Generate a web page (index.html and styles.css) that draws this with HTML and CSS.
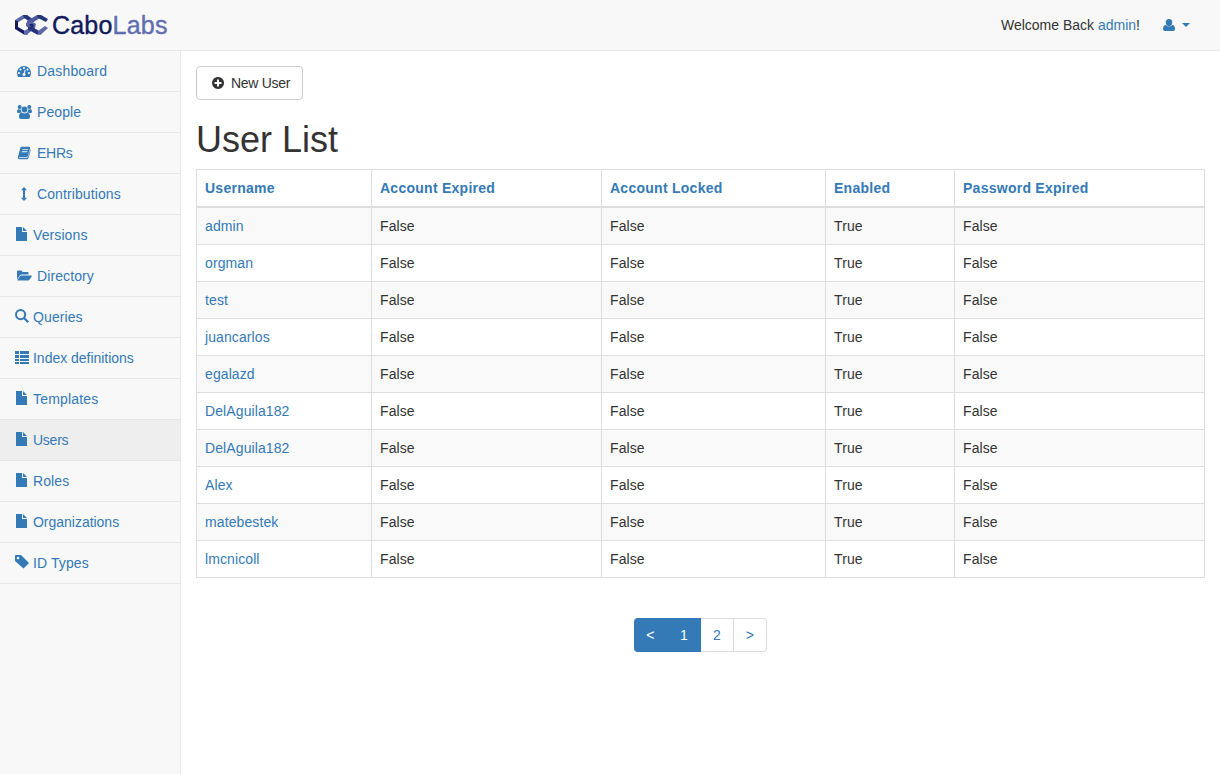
FILE: index.html
```
<!DOCTYPE html>
<html lang="en">
<head>
<meta charset="utf-8">
<title>User List</title>
<link rel="stylesheet" href="styles.css">
</head>
<body>
<svg width="0" height="0" class="defs">
  <symbol id="file" viewBox="0 0 14 14"><path d="M1 0h6v5h5v9H1zM8 0l4 4H8z"/></symbol>
</svg>
<header class="navbar">
  <a class="brand">
    <svg class="logo" width="33" height="20" viewBox="0 0 33 20">
      <path d="M0 5L8 0h5l-3 3-8 5z" fill="#5b68aa"/>
      <path d="M8 0h4l7 5-2 3-8-5z" fill="#26347b"/>
      <path d="M0 5l3 1.500V12l7 4 3 3.500H9L0 14z" fill="#151d60"/>
      <path d="M9 16l8-4.500V8h3v5l-8 6.500H9z" fill="#5b68aa"/>
      <path d="M12 6l10-6h3v3l-8 5-2 1v4l-3-1z" fill="#4c5a9f"/>
      <path d="M11 8l5-2 5 3-1 4-4 1-5-3z" fill="#5663a6"/>
      <path d="M14 9h4l1 2-2 1.500z" fill="#1b2568"/>
      <path d="M22 0h4l7 4-2 3-8-4z" fill="#26347b"/>
      <path d="M13 12l3-1 8 5 2 3.500h-4l-9-5z" fill="#26347b"/>
      <path d="M23 16l7-5 3 2-7 6.500h-3z" fill="#5b68aa"/>
    </svg>
    <span class="brand-name">Cabo<span class="brand-light">Labs</span></span>
  </a>
  <div class="top-right">
    <span class="welcome">Welcome Back <a>admin</a>!</span>
    <a class="user-menu">
      <svg width="12" height="14" viewBox="0 0 12 14"><path d="M6 1a3.200 3.200 0 0 1 3.100 4.300A3.300 3.300 0 0 1 6 8.200a3.300 3.300 0 0 1-3.100-2.900A3.200 3.200 0 0 1 6 1zM2.800 7q3.200 3 6.400 0Q12 7.300 12 11q0 2-2 2H2q-2 0-2-2 0-3.700 2.800-4z"/></svg>
      <svg width="8" height="4" viewBox="0 0 8 4"><path d="M0 0h8L4 4z"/></svg>
    </a>
  </div>
</header>
<div class="layout">
  <nav class="sidebar">
    <a class="item"><svg class="fw" width="18" height="14" viewBox="-256 0 2304 1792"><path fill-rule="evenodd" d="M384 1152q0-53-37.500-90.500t-90.500-37.500-90.500 37.500-37.500 90.500 37.500 90.500 90.500 37.500 90.500-37.500 37.500-90.500zm192-448q0-53-37.500-90.500t-90.500-37.500-90.500 37.500-37.500 90.500 37.500 90.500 90.500 37.500 90.500-37.500 37.500-90.500zm428 481l101-382q6-26-7.500-48.500t-38.500-29.500-48 6.500-30 39.500l-101 382q-60 5-107 43.500t-63 98.500q-20 77 20 146t117 89 146-20 89-117q16-60-6-117t-72-91zm660-33q0-53-37.500-90.500t-90.500-37.500-90.500 37.500-37.500 90.500 37.500 90.500 90.500 37.500 90.500-37.500 37.500-90.500zm-640-640q0-53-37.500-90.500t-90.500-37.500-90.500 37.500-37.500 90.500 37.500 90.500 90.500 37.500 90.500-37.500 37.500-90.500zm448 192q0-53-37.500-90.500t-90.500-37.500-90.500 37.500-37.500 90.500 37.500 90.500 90.500 37.500 90.500-37.500 37.500-90.500zm320 448q0 261-141 483-19 29-54 29h-1402q-35 0-54-29-141-221-141-483 0-182 71-348t191-286 286-191 348-71 348 71 286 191 191 286 71 348z"/></svg><span class="snug-wide">Dashboard</span></a>
    <a class="item"><svg class="fw" width="18" height="14" viewBox="0 0 18 14"><circle cx="4.700" cy="2" r="2"/><circle cx="14.300" cy="2" r="2"/><circle cx="9.500" cy="4.500" r="2.900"/><path d="M3.500 4q1.200.8 2.400.4-.2 1.800.8 2.900-1 0-1.800.8H3.500Q2 8 2 6.500 2 4 3.500 4zM15.500 4q-1.200.8-2.400.4.200 1.800-.8 2.900 1 0 1.800.8h1.400Q17 8 17 6.500 17 4 15.500 4zM6.800 7.400q2.700 2 5.400 0Q15 7.700 15 11.700q0 2.300-2 2.300H6q-2 0-2-2.300 0-4 2.800-4.300z"/></svg><span>People</span></a>
    <a class="item"><svg class="fw" width="18" height="14" viewBox="0 0 18 14"><path fill-rule="evenodd" d="M7 .7h7.200q1.200.2.900 1.300L12.900 10q-.3 1-1.300 1H4.800q-1 0-.9.800h8q.8 0 1.100-.8l2.300-7.800q.6.500.3 1.300L13.500 12q-.4 1.300-1.600 1.300H4.500Q2.800 13.300 2.800 11.500L5.200 2.300Q5.600.7 7 .7zM7.500 3.200l-.3.900h5.600l.3-.9zM6.900 5.300l-.3.900h5.600l.3-.9z"/></svg><span class="tight">EHRs</span></a>
    <a class="item"><svg class="fw" width="18" height="14" viewBox="0 0 18 14"><path d="M9 0l3 3.200h-2v7.600h2L9 14l-3-3.200h2V3.200H6z"/></svg><span>Contributions</span></a>
    <a class="item"><svg class="gl" width="14" height="14"><use href="#file"/></svg><span>Versions</span></a>
    <a class="item"><svg class="fw" width="18" height="14" viewBox="0 0 18 14"><path d="M2 10.500V2.500q0-1 1-1h3.300q1 0 1 1V3h5.200q1 0 1 1v1.600H6.800q-1.200 0-2 1zM6.500 6.500h9.800q.9.100.4 1l-2.500 3.400q-.6.700-1.600.7H3q-.9-.1-.4-.9L5 7.300q.6-.8 1.500-.8z"/></svg><span>Directory</span></a>
    <a class="item"><svg class="gl" width="14" height="14" viewBox="0 0 14 14"><circle cx="5.600" cy="5.600" r="4.600" fill="none" stroke="#337ab7" stroke-width="2"/><path d="M8.200 9.800l1.600-1.600 4.200 4.200-1.600 1.600z"/></svg><span>Queries</span></a>
    <a class="item"><svg class="gl" width="14" height="14" viewBox="0 0 14 14"><path d="M0 1h4v3H0zM5 1h9v3H5zM0 5h4v3H0zM5 5h9v3H5zM0 9h4v2H0zM5 9h9v2H5zM0 12h4v2H0zM5 12h9v2H5z"/></svg><span class="snug">Index definitions</span></a>
    <a class="item"><svg class="gl" width="14" height="14"><use href="#file"/></svg><span class="wide">Templates</span></a>
    <a class="item active"><svg class="gl" width="14" height="14"><use href="#file"/></svg><span class="tight">Users</span></a>
    <a class="item"><svg class="gl" width="14" height="14"><use href="#file"/></svg><span>Roles</span></a>
    <a class="item"><svg class="gl" width="14" height="14"><use href="#file"/></svg><span class="snug">Organizations</span></a>
    <a class="item"><svg class="gl" width="14" height="14" viewBox="0 0 14 14"><path fill-rule="evenodd" d="M0 1q0-1 1-1h5l8 8-5.500 5.500L0 6zM3 1.700a1.300 1.300 0 1 0 .01 0z"/></svg><span>ID Types</span></a>
  </nav>
  <main class="content">
    <button class="btn"><svg width="12" height="12" viewBox="0 0 12 12"><path fill-rule="evenodd" d="M6 0a6 6 0 1 0 .01 0zM5 2.500h2V5h2.500v2H7v2.500H5V7H2.500V5H5z"/></svg><span>New User</span></button>
    <h1>User List</h1>
    <table class="users">
      <colgroup><col class="c1"><col class="c2"><col class="c3"><col class="c4"><col class="c5"></colgroup>
      <thead><tr><th>Username</th><th>Account Expired</th><th>Account Locked</th><th>Enabled</th><th>Password Expired</th></tr></thead>
      <tbody>
        <tr><td><a>admin</a></td><td>False</td><td>False</td><td>True</td><td>False</td></tr>
        <tr><td><a>orgman</a></td><td>False</td><td>False</td><td>True</td><td>False</td></tr>
        <tr><td><a>test</a></td><td>False</td><td>False</td><td>True</td><td>False</td></tr>
        <tr><td><a>juancarlos</a></td><td>False</td><td>False</td><td>True</td><td>False</td></tr>
        <tr><td><a>egalazd</a></td><td>False</td><td>False</td><td>True</td><td>False</td></tr>
        <tr><td><a>DelAguila182</a></td><td>False</td><td>False</td><td>True</td><td>False</td></tr>
        <tr><td><a>DelAguila182</a></td><td>False</td><td>False</td><td>True</td><td>False</td></tr>
        <tr><td><a>Alex</a></td><td>False</td><td>False</td><td>True</td><td>False</td></tr>
        <tr><td><a>matebestek</a></td><td>False</td><td>False</td><td>True</td><td>False</td></tr>
        <tr><td><a>lmcnicoll</a></td><td>False</td><td>False</td><td>True</td><td>False</td></tr>
      </tbody>
    </table>
    <div class="pagination"><a class="page on first">&lt;</a><a class="page on">1</a><a class="page">2</a><a class="page last">&gt;</a></div>
  </main>
</div>
</body>
</html>
```
FILE: styles.css
```
* { box-sizing: border-box; }
body {
  margin: 0;
  background: #f8f8f8;
  color: #333;
  font: 14px/20px "Liberation Sans", Arial, sans-serif;
  letter-spacing: 0.1px;
}
a { color: #337ab7; text-decoration: none; }
svg { display: block; flex: none; fill: currentColor; }
.defs { position: absolute; }
.navbar {
  display: flex;
  justify-content: space-between;
  height: 51px;
  border-bottom: 1px solid #e7e7e7;
  padding: 0 30px 0 15px;
}
.brand { display: flex; align-items: center; gap: 4px; }
.brand-name { font-size: 25px; line-height: 50px; color: #111a5c; letter-spacing: 0.2px; -webkit-text-stroke: 0.4px currentColor; }
.brand-light { color: #626eb0; }
.top-right { display: flex; align-items: center; gap: 23px; }
.welcome { letter-spacing: 0; }
.user-menu { display: flex; align-items: center; gap: 7px; }
.layout { display: flex; height: 723px; }
.sidebar { width: 180px; flex: none; }
.item {
  display: flex;
  align-items: center;
  gap: 4px;
  height: 41px;
  padding: 0 15px;
  border-bottom: 1px solid #e7e7e7;
}
.active { background: #eee; }
.gl { margin-top: -2px; }
.snug { letter-spacing: -0.02px; }
.tight { letter-spacing: -0.25px; }
.wide, .snug-wide { letter-spacing: 0.18px; }
.content {
  flex: 1;
  background: #fff;
  border-left: 1px solid #e7e7e7;
  padding: 15px;
}
.btn {
  display: flex;
  align-items: center;
  gap: 7px;
  width: 107px;
  height: 34px;
  padding: 0 0 0 15px;
  border: 1px solid #ccc;
  border-radius: 4px;
  background: #fff;
  color: #333;
  font: inherit;
  letter-spacing: -0.3px;
}
h1 {
  margin: 20px 0 10px;
  font-size: 36px;
  line-height: 39px;
  font-weight: 400;
  letter-spacing: 0;
}
.users { width: 1009px; border-collapse: collapse; table-layout: fixed; }
.c1 { width: 175px; }
.c2 { width: 230px; }
.c3 { width: 224px; }
.c4 { width: 129px; }
.c5 { width: 250px; }
th, td { height: 37px; padding: 8px; border: 1px solid #ddd; text-align: left; }
th { border-bottom-width: 2px; color: #337ab7; letter-spacing: 0.26px; }
tbody tr:nth-child(odd) { background: #f9f9f9; }
.pagination { display: flex; justify-content: center; margin-top: 40px; }
.page {
  width: 33px;
  height: 34px;
  border: 1px solid #ddd;
  border-left: 0;
  line-height: 32px;
  text-align: center;
}
.on { background: #337ab7; border-color: #337ab7; color: #fff; }
.first { width: 34px; border-radius: 4px 0 0 4px; }
.last { border-radius: 0 4px 4px 0; }
```
